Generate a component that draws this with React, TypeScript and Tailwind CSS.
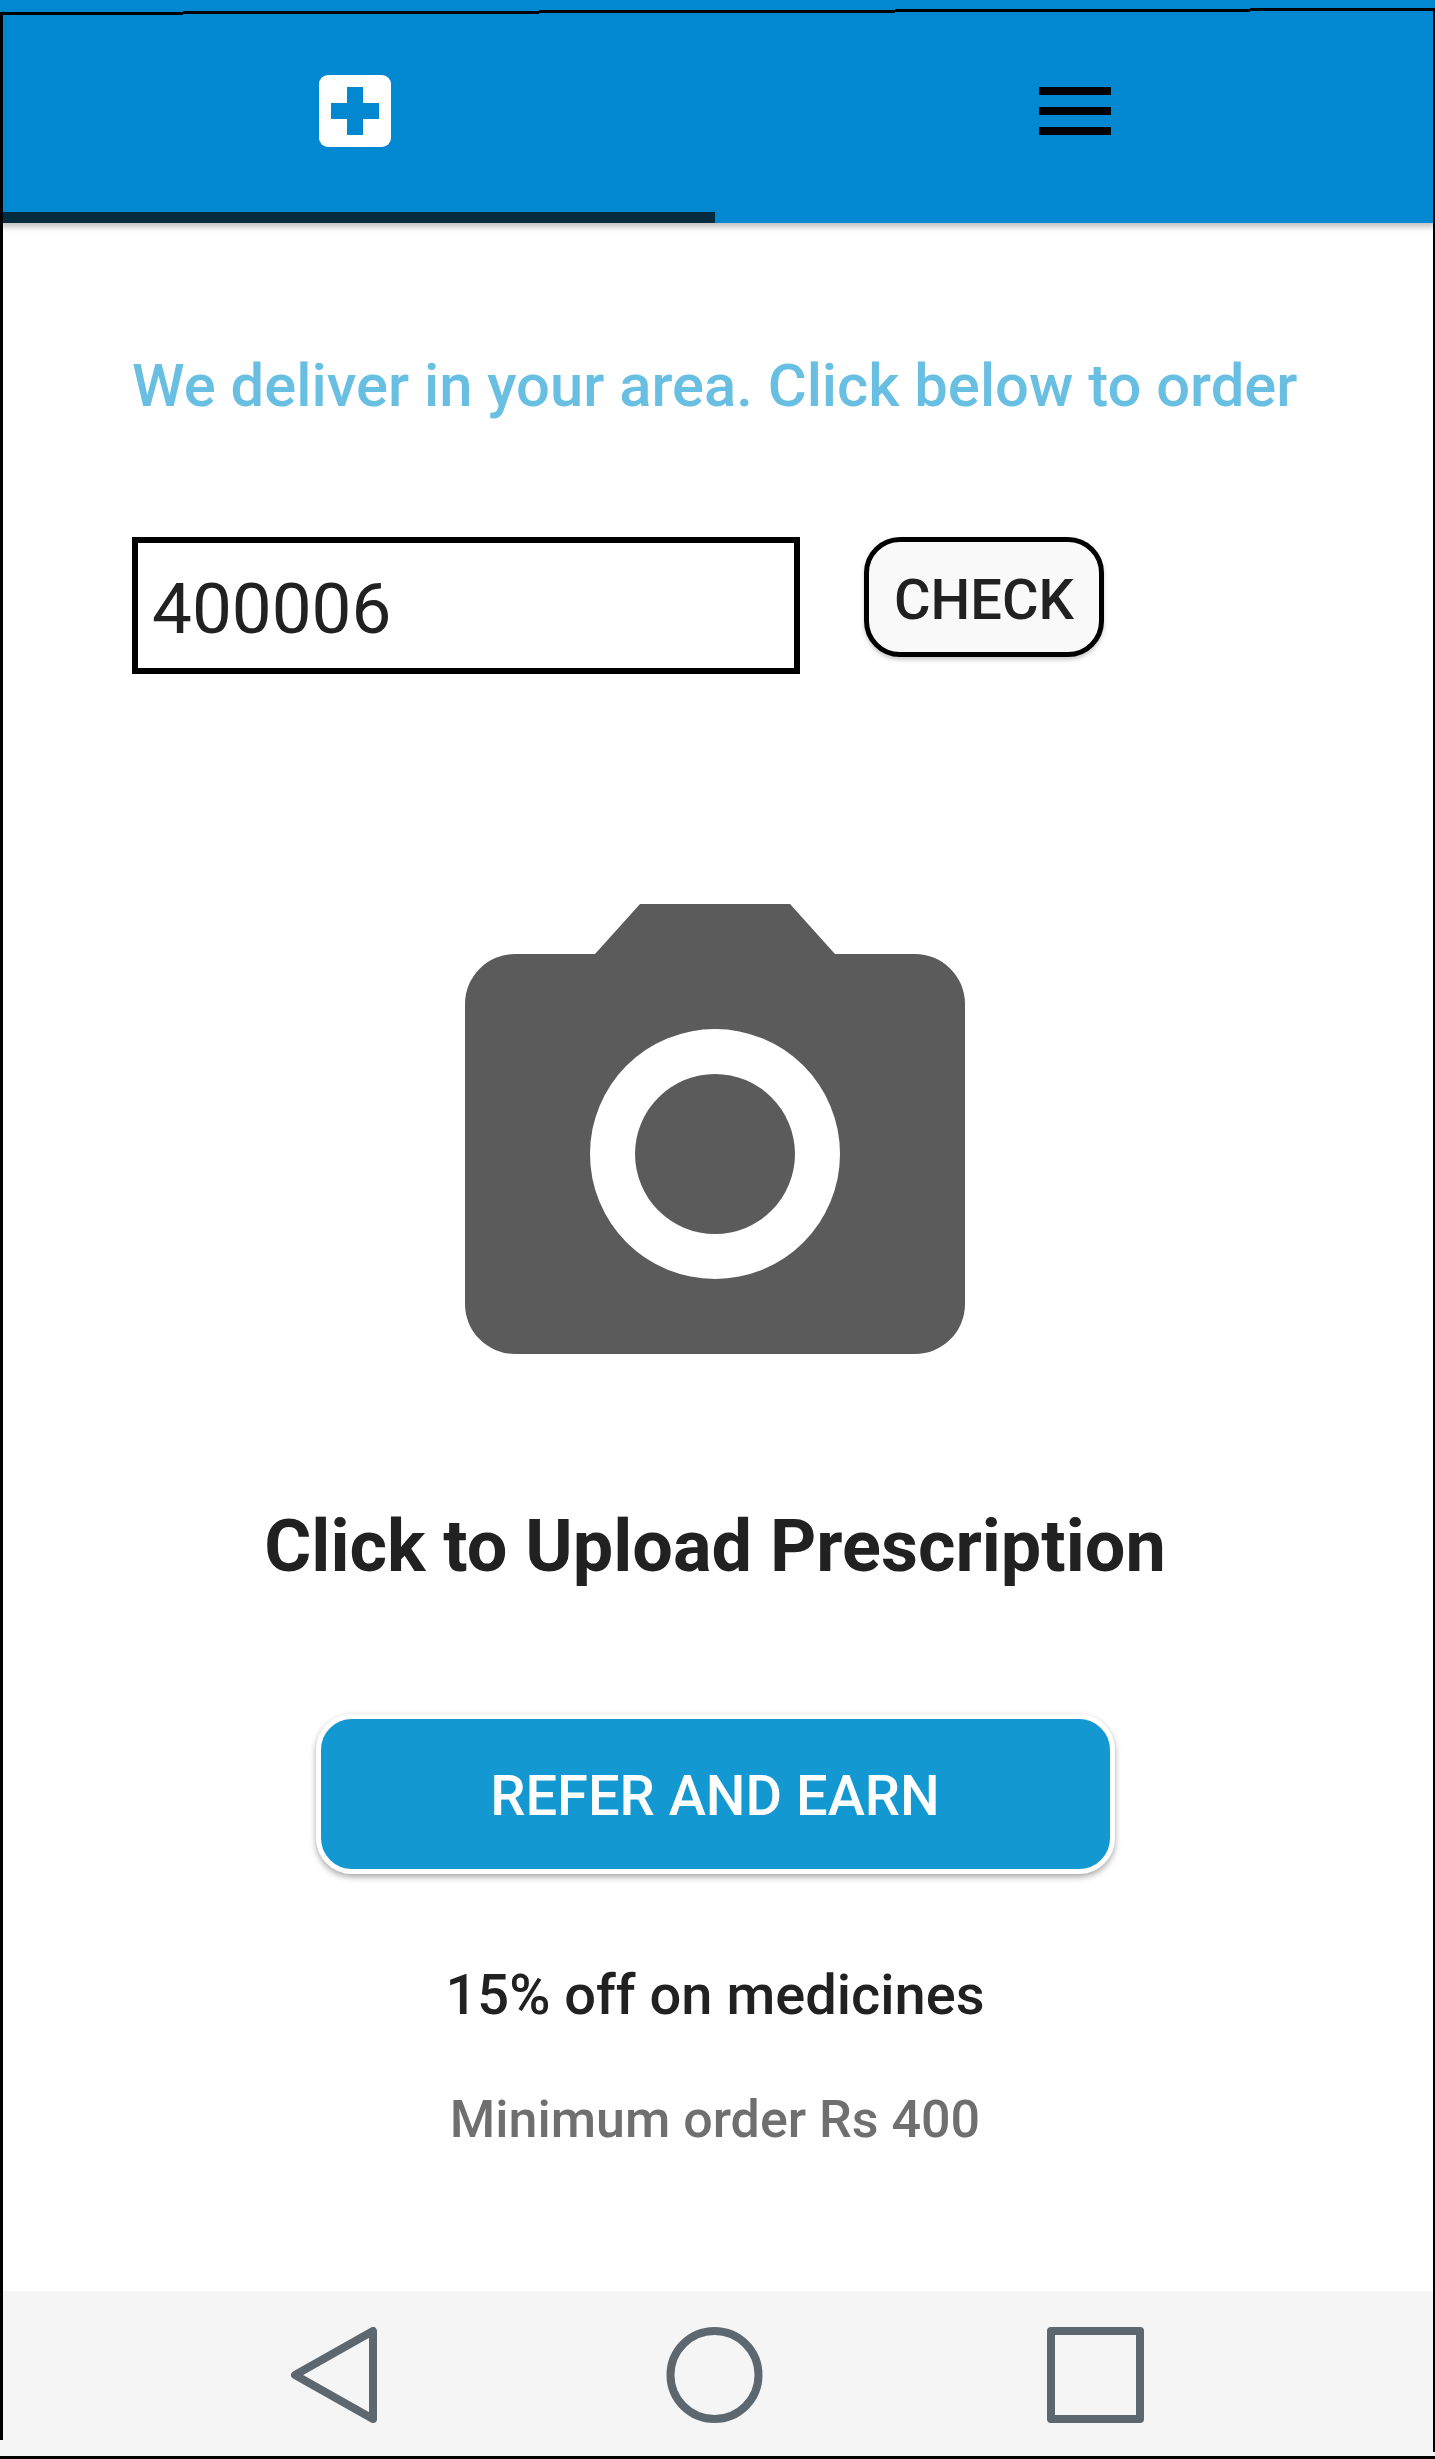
import React from 'react';

const PlusLogo = () => (
  <svg width="72" height="72" viewBox="0 0 72 72">
    <rect width="72" height="72" rx="9" fill="#fff" />
    <path d="M28 12h16v16h16v16H44v16H28V44H12V28h16z" fill="#0288d1" />
  </svg>
);

const CameraIcon = () => (
  <svg width="500" height="450" viewBox="0 0 500 450">
    <path
      d="M130 50 175 0h150l45 50h80a50 50 0 0 1 50 50v300a50 50 0 0 1-50 50H50a50 50 0 0 1-50-50V100a50 50 0 0 1 50-50z"
      fill="#5b5b5b"
    />
    <circle cx="250" cy="250" r="125" fill="#fff" />
    <circle cx="250" cy="250" r="80" fill="#5b5b5b" />
  </svg>
);

export default function App() {
  return (
    <div className="relative flex h-[2459px] w-[1435px] flex-col overflow-hidden bg-white font-['Roboto',sans-serif] text-[#212121]">
      {/* Header */}
      <header className="relative z-10 flex h-[223px] shrink-0 bg-[#0288d1] shadow-[0_4px_6px_rgba(0,0,0,0.25)]">
        <div className="flex h-full w-[715px] items-start justify-center border-b-[11px] border-[#052b3e] pt-[75px] pr-[5px]">
          <PlusLogo />
        </div>
        <div className="flex h-full flex-1 flex-col items-center gap-3 pt-[87px]">
          <span className="h-2 w-[72px] bg-black" />
          <span className="h-2 w-[72px] bg-black" />
          <span className="h-2 w-[72px] bg-black" />
        </div>
      </header>

      <main className="flex flex-1 flex-col pr-[5px]">
        <p className="mt-[130px] pl-[132px] text-[59.75px] leading-[66px] font-medium whitespace-nowrap text-[#68bfe2]">
          We deliver in your area. Click below to order
        </p>

        <div className="mt-[118px] flex items-start gap-[64px] pl-[132px]">
          <input
            readOnly
            value="400006"
            className="h-[137px] w-[668px] border-[6px] border-black bg-white pt-[6px] pl-[14px] text-[71px] text-[#212121] outline-none"
          />
          <button className="flex h-[120px] w-[240px] items-center justify-center rounded-[36px] border-[5px] border-black bg-[#f9f9f9] pt-[6px] text-[56px] font-medium shadow-[0_3px_4px_rgba(0,0,0,0.2)]">
            CHECK
          </button>
        </div>

        <div className="mt-[230px] flex justify-center">
          <CameraIcon />
        </div>

        <h1 className="mt-[151px] text-center text-[72px] leading-[84px] font-bold">Click to Upload Prescription</h1>

        <div className="mt-[125px] flex justify-center">
          <button className="flex h-[160px] w-[799px] items-center justify-center rounded-[36px] border-[5px] border-white bg-[#1398d1] pt-[4px] text-[56px] font-medium text-white shadow-[0_3px_6px_rgba(0,0,0,0.35)]">
            REFER AND EARN
          </button>
        </div>

        <p className="mt-[90px] text-center text-[56px] leading-[62px] font-medium">15% off on medicines</p>
        <p className="mt-[63px] text-center text-[52px] leading-[62px] font-medium text-[#6f6f6f]">Minimum order Rs 400</p>
      </main>

      {/* Android nav bar */}
      <nav className="flex h-[168px] shrink-0 items-start bg-[#f5f5f5] pt-[36px]">
        <svg width="1435" height="96" viewBox="0 0 1435 96" fill="none" stroke="#5c6770" strokeWidth="8" strokeLinejoin="round">
          <path d="M373 4v88L295 48z" />
          <circle cx="714.500" cy="48" r="44" />
          <rect x="1051" y="4" width="89" height="88" />
        </svg>
      </nav>

      {/* Screenshot frame lines */}
      <svg className="absolute top-0 left-0 z-20" width="1435" height="20" viewBox="0 0 1435 20">
        <path d="M0 12h183v-1h356v-1h356v-1h355v-1h185v3h-185v1H895v1H539v1H183v1H0z" fill="#000" shapeRendering="crispEdges" />
      </svg>
      <div className="absolute top-[12px] left-0 z-20 h-[2428px] w-[3px] bg-black" />
      <div className="absolute top-[8px] right-0 z-20 h-[2444px] w-[2px] bg-black" />
      <div className="absolute bottom-0 left-0 z-20 h-[3px] w-full bg-black" />
    </div>
  );
}
